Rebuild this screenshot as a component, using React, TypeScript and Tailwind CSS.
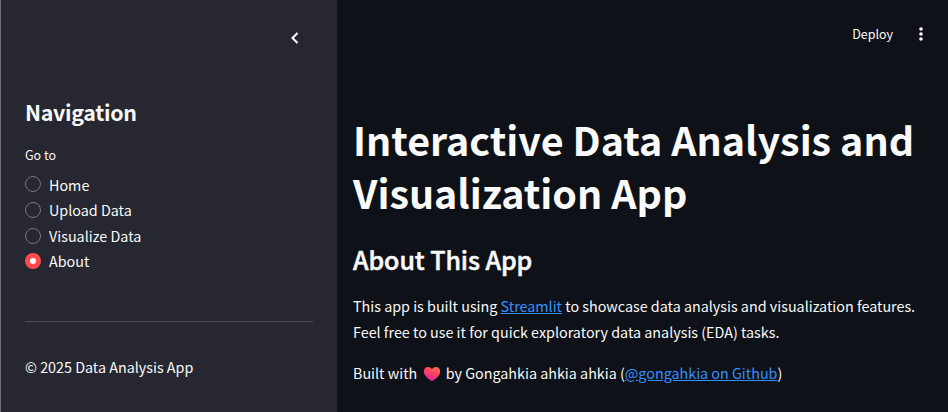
import React from "react";

const options = ["Home", "Upload Data", "Visualize Data", "About"];

function Radio({ label, checked }: { label: string; checked: boolean }) {
  return (
    <label className="flex h-[25.6px] items-start gap-2">
      <span
        className={
          checked
            ? "mt-[4.35px] flex h-4 w-4 items-center justify-center rounded-full bg-[#ff4b4b]"
            : "mt-[4.35px] h-4 w-4 rounded-full border border-[#777881] bg-[#262730]"
        }
      >
        {checked && <span className="h-1.5 w-1.5 rounded-full bg-white" />}
      </span>
      <span className="-mt-[0.4px] text-[14.33px]">{label}</span>
    </label>
  );
}

function Heart() {
  return (
    <svg className="mr-[1.5px] ml-[2.5px] inline-block h-4 w-[18px] align-[-3px]" viewBox="0 0 18 16">
      <defs>
        <linearGradient id="heart" x1="0.8" y1="0" x2="0.3" y2="1">
          <stop offset="0" stopColor="#ff6a52" />
          <stop offset="0.45" stopColor="#fb4463" />
          <stop offset="1" stopColor="#e01ba8" />
        </linearGradient>
      </defs>
      <path
        fill="url(#heart)"
        d="M9 15.3C5.5 13.2.8 9.8.8 5.6.8 2.8 2.8 1 5 1c1.700 0 3.200.8 4 2.200C9.800 1.800 11.300 1 13 1c2.200 0 4.200 1.800 4.200 4.600 0 4.200-4.700 7.600-8.200 9.700z"
      />
    </svg>
  );
}

export default function App() {
  return (
    <div className="flex h-[412px] w-[948px] overflow-hidden bg-[#0e1117] font-['Noto_Sans_CJK_SC',sans-serif] text-[14.33px] leading-[25.6px] whitespace-nowrap text-[#fafafa]">
      <aside className="flex w-[337px] shrink-0 flex-col border-l border-[#6f716f] bg-[#262730] pl-6">
        <div className="flex h-[76px] items-center justify-end pr-8">
          <svg className="h-5 w-5" viewBox="0 0 24 24" fill="none" stroke="currentColor" strokeWidth="2.500">
            <path d="M15 6l-6 6 6 6" />
          </svg>
        </div>
        <h2 className="mt-[21px] text-[21.4px] leading-[29px] font-bold tracking-[-0.3px]">Navigation</h2>
        <p className="mt-[18px] text-[12.5px] leading-[21px]">Go to</p>
        <div className="mt-[7px]">
          {options.map((o) => (
            <Radio key={o} label={o} checked={o === "About"} />
          ))}
        </div>
        <hr className="mt-[46.6px] mr-6 border-[#4b4c54]" />
        <p className="mt-8">© 2025 Data Analysis App</p>
      </aside>
      <main className="flex-1 pl-4">
        <header className="flex h-[68px] items-center justify-end gap-[19px] pr-[18px]">
          <span className="text-[12.5px]">Deploy</span>
          <svg className="h-[18px] w-[18px]" viewBox="0 0 18 18" fill="currentColor">
            <circle cx="9" cy="4" r="1.800" />
            <circle cx="9" cy="9" r="1.800" />
            <circle cx="9" cy="14" r="1.800" />
          </svg>
        </header>
        <h1 className="mt-[45px] text-[39.45px] leading-[52.8px] font-bold">
          Interactive Data Analysis and
          <br />
          Visualization App
        </h1>
        <h2 className="mt-[23px] text-[25px] leading-[34px] font-medium tracking-[-0.08px] [-webkit-text-stroke:0.5px_currentColor]">
          About This App
        </h2>
        <p className="mt-[17px] leading-[26px]">
          This app is built using <a className="text-[#3590ff] underline">Streamlit</a> to showcase data analysis and visualization features.
          <br />
          Feel free to use it for quick exploratory data analysis (EDA) tasks.
        </p>
        <p className="mt-[15px] leading-[26px]">
          Built with{" "}<Heart />{" "}by Gongahkia ahkia ahkia (<a className="text-[#3590ff] underline">@gongahkia on Github</a>)
        </p>
      </main>
    </div>
  );
}
